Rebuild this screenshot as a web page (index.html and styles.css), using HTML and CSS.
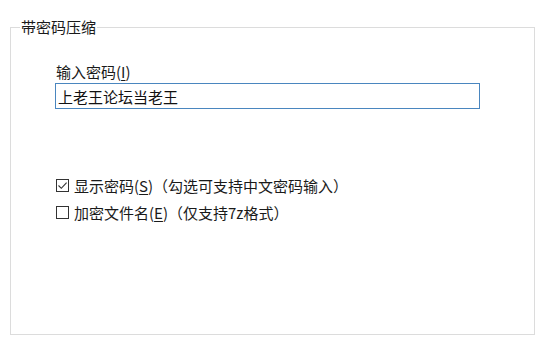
FILE: index.html
```html
<!DOCTYPE html>
<html lang="zh">
<head>
<meta charset="utf-8">
<link rel="stylesheet" href="styles.css">
</head>
<body>
<fieldset class="group">
  <legend class="group-title">带密码压缩</legend>
  <div class="content">
    <div class="field">
      <label class="field-label" for="pwd">输入密码(<u>I</u>)</label>
      <input class="field-input" id="pwd" type="text" value="上老王论坛当老王">
    </div>
    <div class="options">
      <label class="option"><span class="box"><svg viewBox="0 0 13 13" width="13" height="13"><path d="M2.5 6.5 L5.3 9.3 L10.6 3.6" fill="none" stroke="#333" stroke-width="1.1"/></svg></span>显示密码(<u>S</u>)（勾选可支持中文密码输入）</label>
      <label class="option"><span class="box"></span>加密文件名(<u>E</u>)（仅支持7z格式）</label>
    </div>
  </div>
</fieldset>
</body>
</html>
```

FILE: styles.css
```css
html, body {
  margin: 0;
  padding: 0;
  background: #ffffff;
}
body {
  padding: 17px 0 0 10px;
  font-family: "Noto Sans CJK SC", "Microsoft YaHei", sans-serif;
  font-size: 15px;
  color: #1a1a1a;
}
.group {
  box-sizing: border-box;
  width: 525px;
  height: 318px;
  margin: 0;
  padding: 0;
  border: 1px solid #dcdcdc;
}
.group-title {
  padding: 0 1px;
  margin-left: 9px;
  line-height: 20px;
  font-size: 15px;
}
.content {
  padding-left: 44px;
}
.field {
  display: flex;
  flex-direction: column;
  margin-top: 25px;
}
.field-label {
  line-height: 20px;
  margin-left: 1px;
}
.field-input {
  box-sizing: border-box;
  width: 425px;
  height: 26px;
  margin: 1px 0 0 0;
  padding: 0 0 0 2px;
  border: 1px solid #4a86bf;
  outline: none;
  font-family: inherit;
  font-size: 15px;
  color: #111;
  background: #fff;
}
.options {
  display: flex;
  flex-direction: column;
  gap: 6px;
  margin-top: 66px;
}
.option {
  display: flex;
  align-items: center;
  line-height: 21px;
}
.option u, .field-label u {
  text-decoration-thickness: 1px;
  text-underline-offset: 2px;
}
.box {
  box-sizing: border-box;
  width: 13px;
  height: 13px;
  border: 1px solid #333;
  margin: 0 5px 0 1px;
  display: flex;
  align-items: center;
  justify-content: center;
  background: #fff;
}
.box svg {
  display: block;
  flex: none;
  margin: -1px;
}
```
